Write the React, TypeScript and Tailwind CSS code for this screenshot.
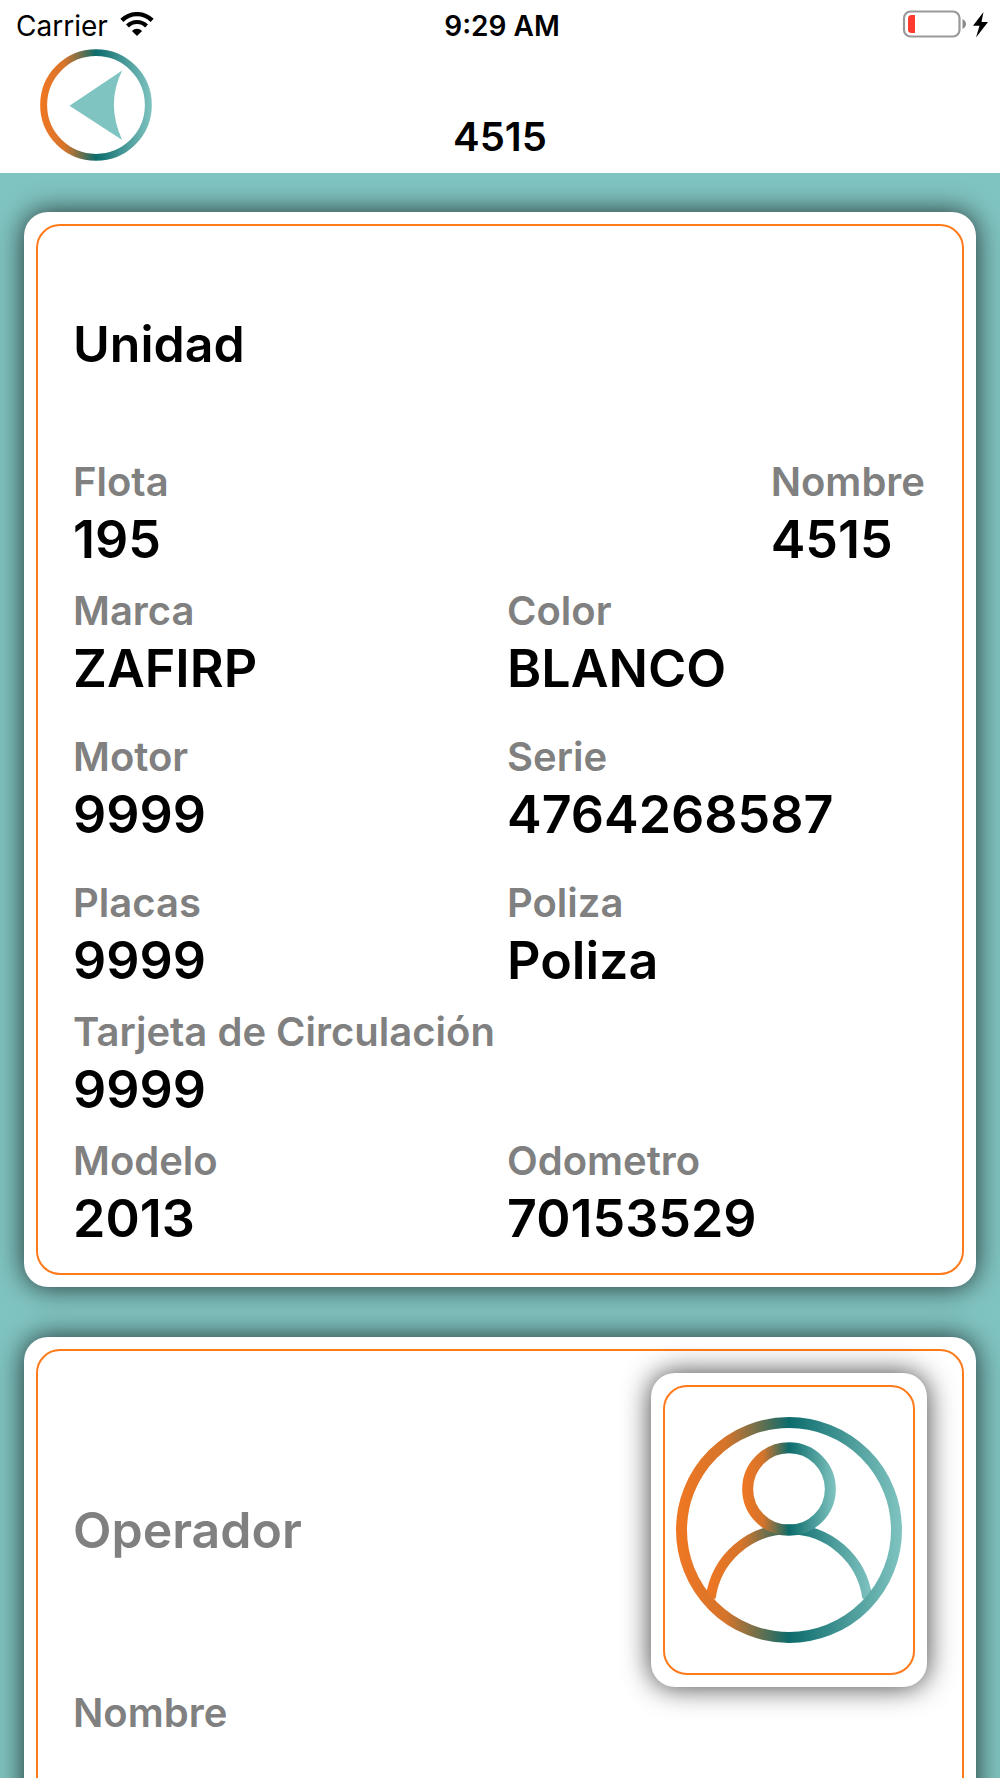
import type { ReactNode } from "react";

function WifiIcon() {
  return (
    <svg viewBox="0 0 101 73" className="h-6 w-[34px]" role="img" aria-label="Wi-Fi">
      <g fill="none" stroke="#000">
        <path d="M4.5 25.5 A65 65 0 0 1 96.500 25.5" strokeWidth="13" />
        <path d="M21.500 42.500 A41 41 0 0 1 79.500 42.500" strokeWidth="12.500" />
      </g>
      <path d="M50.500 73 L35 57.500 A22.500 22.500 0 0 1 66 57.500 Z" />
    </svg>
  );
}

function BatteryIcon() {
  return (
    <svg viewBox="0 0 86 28" className="h-7 w-[86px]" role="img" aria-label="Battery low, charging">
      <rect x="2" y="1.500" width="55.500" height="25" rx="6.500" fill="none" stroke="#999" strokeWidth="2.200" />
      <path d="M13 5 V23 H9.500 A3.500 3.500 0 0 1 6 19.500 V8.500 A3.500 3.500 0 0 1 9.500 5 Z" fill="#ff3b30" />
      <path d="M60.500 9 Q64 11 64 14 Q64 17 60.500 19 Z" fill="#8a8a8a" />
      <path d="M81.500 2 L71 15.800 H77.500 L74 27.500 L86 12 H79.500 Z" />
    </svg>
  );
}

function GradientStops() {
  return (
    <>
      <stop offset="0" stopColor="#f07722" />
      <stop offset="0.22" stopColor="#d5742b" />
      <stop offset="0.5" stopColor="#0c6c6c" />
      <stop offset="1" stopColor="#80c4c1" />
    </>
  );
}

function BackIcon() {
  return (
    <svg viewBox="0 0 338 338" className="size-28" aria-hidden="true">
      <defs>
        <linearGradient id="back-ring" gradientUnits="userSpaceOnUse" x1="0" x2="338" y1="0" y2="0">
          <GradientStops />
        </linearGradient>
      </defs>
      <circle cx="169" cy="169" r="158" fill="none" stroke="url(#back-ring)" strokeWidth="21" />
      <path d="M89 171 L248 65 Q198 166 248 275 Z" fill="#80c4c1" />
    </svg>
  );
}

function PersonIcon() {
  return (
    <svg viewBox="171 291 678 678" className="w-full" role="img" aria-label="Operador">
      <defs>
        <linearGradient id="ring" gradientUnits="userSpaceOnUse" x1="171" x2="849" y1="0" y2="0">
          <GradientStops />
        </linearGradient>
        <linearGradient id="head" gradientUnits="userSpaceOnUse" x1="370" x2="650" y1="0" y2="0">
          <GradientStops />
        </linearGradient>
        <linearGradient id="body" gradientUnits="userSpaceOnUse" x1="260" x2="760" y1="0" y2="0">
          <GradientStops />
        </linearGradient>
      </defs>
      <g fill="none" strokeWidth="33">
        <path d="M275 834 A237 237 0 0 1 745 834" stroke="url(#body)" strokeWidth="30" />
        <circle cx="510" cy="630" r="322.500" stroke="url(#ring)" />
        <circle cx="510" cy="507" r="124" stroke="url(#head)" />
      </g>
    </svg>
  );
}

function Field({ label, value, className = "" }: { label: string; value?: string; className?: string }) {
  return (
    <div className={className}>
      <dt className="text-[40px] leading-[52px] font-semibold text-[#808080]">{label}</dt>
      {value && <dd className="text-[52px] leading-[64px] font-semibold">{value}</dd>}
    </div>
  );
}

function Card({ children }: { children: ReactNode }) {
  return (
    <section className="rounded-3xl bg-white p-3 shadow-[0_0_28px_rgba(0,0,0,0.76)]">
      <div className="rounded-3xl border-2 border-[#ff7a1a] px-[35px] py-[22px]">{children}</div>
    </section>
  );
}

export default function App() {
  return (
    <div className="flex h-screen flex-col bg-[#80c4c1] font-['Inter',sans-serif] text-black">
      <header className="shrink-0 bg-white">
        <div className="grid h-12 grid-cols-[1fr_auto_1fr] items-center pr-3 pl-4 text-[28px] leading-8">
          <div className="flex items-center gap-3">
            <span className="pt-1">Carrier</span>
            <WifiIcon />
          </div>
          <time className="pt-1 font-semibold">9:29 AM</time>
          <div className="flex justify-end">
            <BatteryIcon />
          </div>
        </div>
        <div className="grid h-[125px] grid-cols-[1fr_auto_1fr] items-end px-10 pb-3">
          <button type="button" aria-label="Volver" className="size-28 rounded-full">
            <BackIcon />
          </button>
          <h1 className="text-[40px] leading-[48px] font-semibold">4515</h1>
        </div>
      </header>

      <main className="flex min-h-0 flex-1 flex-col gap-[50px] overflow-y-auto px-6 pt-[39px] [scrollbar-width:none]">
        <Card>
          <h2 className="pt-16 pb-20 text-[50px] leading-[64px] font-semibold">Unidad</h2>
          <dl>
            <div className="mb-[13px] flex justify-between pr-0.5">
              <Field label="Flota" value="195" />
              <Field label="Nombre" value="4515" />
            </div>
            <div className="grid grid-cols-2 gap-x-[14px]">
              <Field label="Marca" value="ZAFIRP" className="mb-[30px]" />
              <Field label="Color" value="BLANCO" />
              <Field label="Motor" value="9999" className="mb-[30px]" />
              <Field label="Serie" value="4764268587" />
              <Field label="Placas" value="9999" className="mb-[13px]" />
              <Field label="Poliza" value="Poliza" />
              <Field label="Tarjeta de Circulación" value="9999" className="col-span-2 mb-[13px]" />
              <Field label="Modelo" value="2013" />
              <Field label="Odometro" value="70153529" />
            </div>
          </dl>
        </Card>

        <Card>
          <div className="flex items-center justify-between">
            <h2 className="text-[50px] leading-[64px] font-semibold text-[#808080]">Operador</h2>
            <div className="w-[276px] rounded-3xl bg-white p-3 shadow-[0_0_28px_rgba(0,0,0,0.76)]">
              <div className="rounded-3xl border-2 border-[#ff7a1a] px-[11px] py-[30px]">
                <PersonIcon />
              </div>
            </div>
          </div>
          <dl className="pb-20">
            <Field label="Nombre" />
          </dl>
        </Card>
      </main>
    </div>
  );
}
